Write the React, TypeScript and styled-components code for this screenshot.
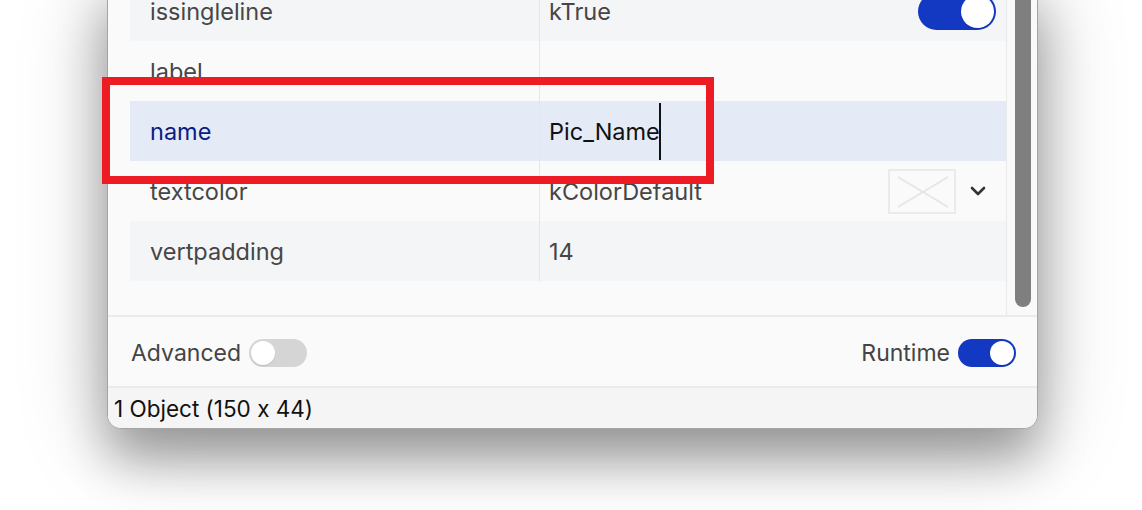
import styled, { createGlobalStyle } from 'styled-components';

const GlobalStyle = createGlobalStyle`
  html, body {
    margin: 0;
    padding: 0;
    background: #ffffff;
    overflow: hidden;
  }
  body {
    font-family: Inter, 'Noto Sans', 'Liberation Sans', sans-serif;
    font-feature-settings: 'calt' 0;
  }
`;

type Prop = {
  name: string;
  value: string;
  shade?: boolean;
  selected?: boolean;
  editing?: boolean;
  toggle?: boolean;
  swatch?: boolean;
};

// visible part of the property list
const props: Prop[] = [
  { name: 'issingleline', value: 'kTrue', shade: true, toggle: true },
  { name: 'label', value: '' },
  { name: 'name', value: 'Pic_Name', selected: true, editing: true },
  { name: 'textcolor', value: 'kColorDefault', swatch: true },
  { name: 'vertpadding', value: '14', shade: true },
];

const App = () => {
  return (
    <Stage>
      <GlobalStyle />
      <Window>
        <ScrollArea>
          <Table>
            {props.map((p) => (
              <Row key={p.name} shade={p.shade} selected={p.selected}>
                <NameCell selected={p.selected}>{p.name}</NameCell>
                <ValueCell>
                  <Value editing={p.editing}>
                    {p.value}
                    {p.editing && <Caret />}
                  </Value>
                  {p.toggle && <Switch on big />}
                  {p.swatch && (
                    <>
                      <Swatch>
                        <svg width="64" height="41" viewBox="0 0 64 41">
                          <line x1="8" y1="6" x2="58" y2="36" stroke="#e6e6e6" strokeWidth="2" />
                          <line x1="58" y1="6" x2="8" y2="36" stroke="#e6e6e6" strokeWidth="2" />
                        </svg>
                      </Swatch>
                      <Chevron>
                        <svg width="16" height="10" viewBox="0 0 16 10">
                          <path d="M2 2 L8 8 L14 2" fill="none" stroke="#333" strokeWidth="2.6" strokeLinecap="round" strokeLinejoin="round" />
                        </svg>
                      </Chevron>
                    </>
                  )}
                </ValueCell>
              </Row>
            ))}
          </Table>
          <Track>
            <Thumb />
          </Track>
        </ScrollArea>
        <Toolbar>
          <ToggleGroup>
            <ToolLabel>Advanced</ToolLabel>
            <Switch />
          </ToggleGroup>
          <ToggleGroup>
            <ToolLabel>Runtime</ToolLabel>
            <Switch on />
          </ToggleGroup>
        </Toolbar>
        <StatusBar>1 Object (150 x 44)</StatusBar>
      </Window>
      <Highlight />
    </Stage>
  );
};
export default App;

const Stage = styled.div`
  position: relative;
  width: 1142px;
  height: 510px;
  padding-left: 107px;
  box-sizing: border-box;
  overflow: hidden;
`;

const Window = styled.div`
  width: 931px;
  margin-top: -20px;
  box-sizing: border-box;
  background: #fafafa;
  border: 1px solid #a4a4a4;
  border-radius: 0 0 14px 14px;
  overflow: hidden;
  box-shadow: 0 30px 50px rgba(0, 0, 0, 0.32), 0 10px 90px rgba(0, 0, 0, 0.22);
`;

const ScrollArea = styled.div`
  display: flex;
  border-bottom: 2px solid #ebebeb;
`;

const Table = styled.div`
  flex: 1;
  padding: 0 0 34px 22px;
  display: flex;
  flex-direction: column;
`;

const Row = styled.div<{ shade?: boolean; selected?: boolean }>`
  display: grid;
  grid-template-columns: 409px 1fr;
  height: 60px;
  background: ${(p) => (p.selected ? '#e4eaf6' : p.shade ? '#f4f5f7' : '#fafafa')};
`;

const NameCell = styled.div<{ selected?: boolean }>`
  display: flex;
  align-items: center;
  padding-left: 20px;
  font-size: 23.5px;
  color: ${(p) => (p.selected ? '#0b1d84' : '#464646')};
`;

const ValueCell = styled.div`
  display: flex;
  align-items: center;
  padding: 0 10px 0 9px;
  border-left: 1px solid #e6e6e6;
`;

const Value = styled.div<{ editing?: boolean }>`
  flex: 1;
  display: flex;
  align-items: center;
  height: 100%;
  font-size: 23.5px;
  color: ${(p) => (p.editing ? '#111111' : '#464646')};
`;

const Caret = styled.span`
  width: 2px;
  height: 57px;
  background: #111;
  margin-left: -1px;
`;

const Switch = styled.div<{ on?: boolean; big?: boolean }>`
  width: ${(p) => (p.big ? 78 : 58)}px;
  height: ${(p) => (p.big ? 37 : 28)}px;
  border-radius: 20px;
  background: ${(p) => (p.on ? '#1338c2' : '#d5d5d5')};
  display: flex;
  align-items: center;
  justify-content: ${(p) => (p.on ? 'flex-end' : 'flex-start')};
  padding: 2px;
  box-sizing: border-box;
  flex-shrink: 0;

  &::after {
    content: '';
    width: ${(p) => (p.big ? 33 : 24)}px;
    height: ${(p) => (p.big ? 33 : 24)}px;
    border-radius: 50%;
    background: #ffffff;
    box-shadow: 0 1px 1px rgba(0, 0, 0, 0.12);
  }
`;

const Swatch = styled.div`
  width: 64px;
  height: 41px;
  border: 2px solid #ebebeb;
  display: flex;
`;

const Chevron = styled.div`
  width: 44px;
  display: flex;
  justify-content: center;
  margin-right: -4px;
`;

const Track = styled.div`
  width: 30px;
  border-left: 1px solid #e9e9e9;
  background: #f9f9f9;
  display: flex;
  justify-content: center;
  padding-bottom: 8px;
`;

const Thumb = styled.div`
  width: 16px;
  background: #7f7f7f;
  border-radius: 8px;
  margin-left: 1px;
`;

const Toolbar = styled.div`
  height: 67px;
  display: flex;
  align-items: center;
  justify-content: space-between;
  padding: 2px 21px 0 23px;
  border-bottom: 2px solid #ebebeb;
`;

const ToggleGroup = styled.div`
  display: flex;
  align-items: center;
  gap: 8px;
`;

const ToolLabel = styled.span`
  font-size: 23px;
  color: #444444;
`;

const StatusBar = styled.div`
  height: 40px;
  display: flex;
  align-items: center;
  padding-left: 6px;
  background: #f5f5f5;
  font-size: 22.5px;
  color: #111111;
`;

const Highlight = styled.div`
  position: absolute;
  left: 102px;
  top: 77px;
  width: 612px;
  height: 107px;
  box-sizing: border-box;
  border: 8px solid #ed1c24;
  pointer-events: none;
`;
